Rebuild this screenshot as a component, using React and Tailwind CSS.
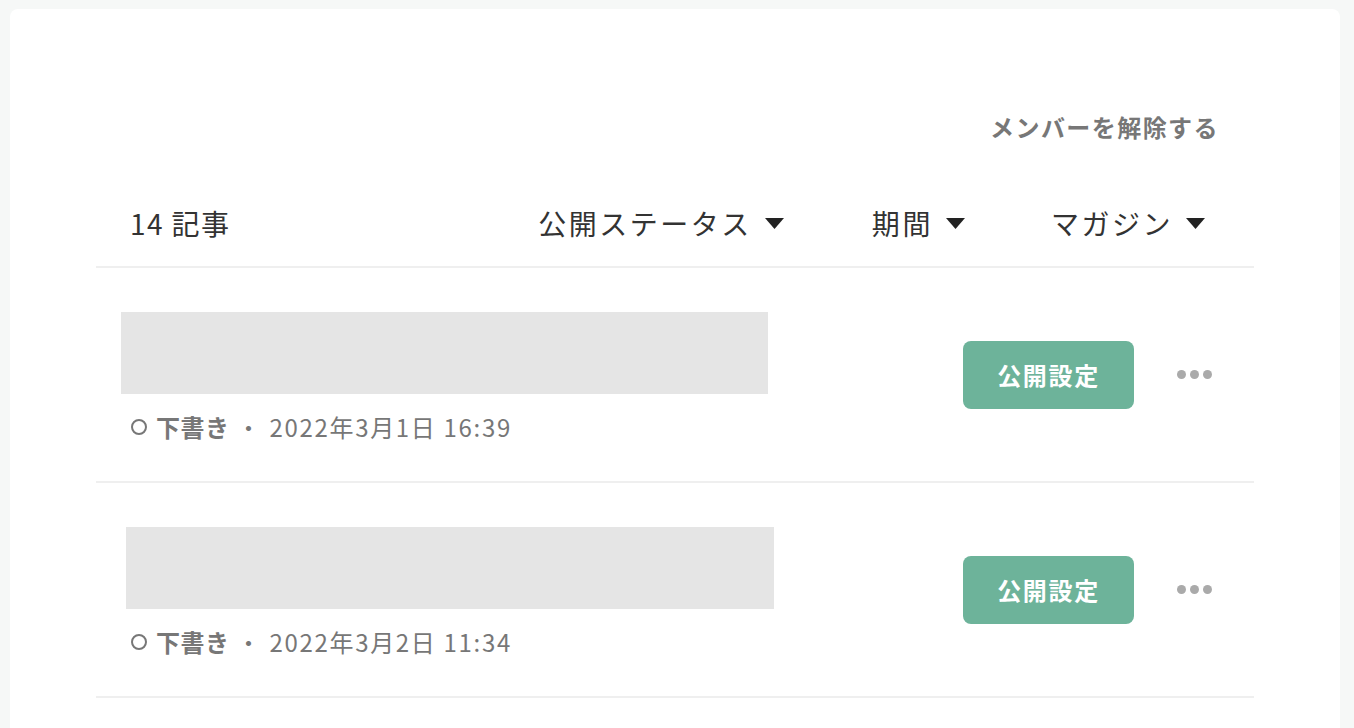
import React from 'react'

const posts = [
  { date: '2022年3月1日 16:39', offset: 'ml-[25px]', width: 'w-[647px]' },
  { date: '2022年3月2日 11:34', offset: 'ml-[30px]', width: 'w-[648px]' },
]

function Caret() {
  return (
    <svg width="19" height="11" viewBox="0 0 19 11" className="ml-[13px]">
      <path d="M0 0 H19 L9.5 11 Z" fill="#222" />
    </svg>
  )
}

function Filter({ label, className = '' }) {
  return (
    <button className={`flex items-center text-[28px] tracking-[0.09em] text-[#333] ${className}`}>
      {label}
      <Caret />
    </button>
  )
}

function PostRow({ post }) {
  return (
    <div className="flex border-b-2 border-[#efefef] h-[215px]">
      <div className="flex-1 flex flex-col pt-[44px]">
        <div className={`${post.offset} ${post.width} h-[82px] bg-[#e5e5e5]`} />
        <div className="flex items-center mt-[16px] ml-[35px] text-[24px] leading-[34px] text-[#777]">
          <span className="w-[16px] h-[16px] rounded-full border-2 border-[#777]" />
          <span className="ml-[9px] font-bold tracking-[0.02em]">下書き</span>
          <span className="ml-[2px] w-[34px] text-center">・</span>
          <span className="ml-[4px] tracking-[0.07em]">{post.date}</span>
        </div>
      </div>
      <button className="self-center w-[171px] h-[68px] rounded-[8px] bg-[#6db39a] text-white font-bold text-[24px] tracking-[0.07em]">
        公開設定
      </button>
      <div className="self-center flex items-center gap-[4px] ml-[43px] mr-[42px]">
        <span className="w-[9px] h-[9px] rounded-full bg-[#aaa]" />
        <span className="w-[9px] h-[9px] rounded-full bg-[#aaa]" />
        <span className="w-[9px] h-[9px] rounded-full bg-[#aaa]" />
      </div>
    </div>
  )
}

export default function App() {
  return (
    <div
      className="h-screen bg-[#f6f8f7] pt-[9px] pl-[10px] pr-[14px] overflow-hidden"
      style={{ fontFamily: '"Noto Sans CJK JP", "Noto Sans", sans-serif' }}
    >
      <div className="bg-white rounded-[8px] min-h-[760px] px-[86px] pt-[106px]">
        <div className="flex justify-end pr-[35px]">
          <button className="text-[24px] font-bold tracking-[0.06em] text-[#777] leading-none">メンバーを解除する</button>
        </div>
        <div className="flex items-center h-[88px] mt-[41px] border-b-2 border-[#efefef]">
          <div className="flex-1 pl-[34px] text-[28px] tracking-[0.05em] text-[#333]">14 記事</div>
          <Filter label="公開ステータス" />
          <Filter label="期間" className="ml-[88px]" />
          <Filter label="マガジン" className="ml-[86px] mr-[49px]" />
        </div>
        {posts.map((p) => (
          <PostRow key={p.date} post={p} />
        ))}
      </div>
    </div>
  )
}
